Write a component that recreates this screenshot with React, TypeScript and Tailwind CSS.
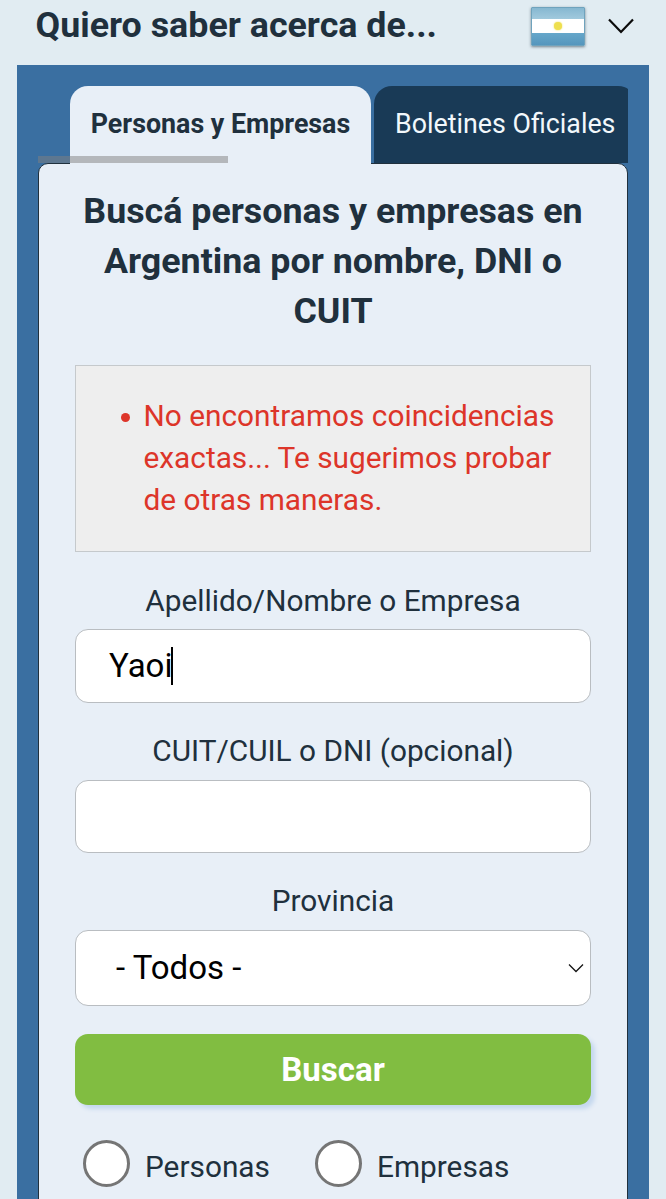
import type { ReactNode } from "react";

function Flag() {
  return (
    <div className="flex h-[39px] w-[54px] flex-col rounded-[1px] border border-[#6fa3bd] shadow-[0_1px_3px_rgba(40,60,75,0.6)]">
      <div className="h-[11px] bg-linear-to-b from-[#86b8d1] to-[#a1c9dd]" />
      <div className="flex h-[14px] items-center justify-center bg-white">
        <div className="size-[8px] rounded-full bg-[#eedf4e] shadow-[0_0_2px_#eedf4e]" />
      </div>
      <div className="flex-1 bg-linear-to-b from-[#66a7ca] to-[#5596bd]" />
    </div>
  );
}

function Label({ children }: { children: ReactNode }) {
  return (
    <div className="h-[42px] text-center text-[29.8px] leading-[42px] whitespace-nowrap text-[#20303d]">
      {children}
    </div>
  );
}

function Radio({ label }: { label: string }) {
  return (
    <div className="flex w-[232px] items-start">
      <div className="size-[47px] rounded-full border-[3px] border-[#757575] bg-white" />
      <span className="mt-[6px] ml-[15px] text-[29.8px] leading-[42px] text-[#20303d]">{label}</span>
    </div>
  );
}

export default function App() {
  return (
    <div className="h-[1199px] w-[666px] overflow-hidden bg-[#e1ecf2] font-[Roboto,sans-serif] text-[#20303d]">
      <header className="flex h-[65px] items-start pl-[35.5px]">
        <h1 className="w-[494.5px] text-[35.8px] leading-[51px] font-bold whitespace-nowrap">
          Quiero saber acerca de...
        </h1>
        <div className="mt-[7px] ml-px">
          <Flag />
        </div>
        <svg className="mt-[17px] ml-[23px]" width="28" height="18" viewBox="0 0 28 18" fill="none">
          <path d="M1 2.5L13 15L25 2.5" stroke="#0b0b0b" strokeWidth="2.2" />
        </svg>
      </header>

      <main className="ml-[17px] h-[1134px] w-[632px] bg-[#3a6fa1] px-[21px] pt-[21px]">
        <nav className="relative z-10 -mb-px flex h-[78px] items-start overflow-hidden pl-[32px] whitespace-nowrap">
          <div className="h-[78px] w-[301px] shrink-0 rounded-t-[18px] bg-[#e8eff7] text-center text-[26.8px] leading-[77px] font-bold">
            Personas y Empresas
          </div>
          <div className="ml-[3px] h-[77px] w-[262px] shrink-0 rounded-t-[18px] bg-[#193a56] pl-[21px] text-[26.8px] leading-[77px] text-[#f2f8fc]">
            Boletines Oficiales
          </div>
          <div className="absolute bottom-px left-0 h-[7px] w-[190px] bg-[#808080]/50" />
        </nav>

        <div className="h-[1036px]">
          <section className="h-[1060px] rounded-t-[10px] border border-[#20303d] bg-[#e8eff7] px-[36px] pt-[22px]">
            <h2 className="text-center text-[35.8px] leading-[50px] font-bold whitespace-nowrap">
              Buscá personas y empresas en
              <br />
              Argentina por nombre, DNI o
              <br />
              CUIT
            </h2>

            <div className="mt-[29px] flex h-[187px] w-[516px] border border-[#c5c9cc] bg-[#eeeeee] pt-[29px] pl-[45px] text-[#dd3529]">
              <span className="mt-[18px] size-[9px] shrink-0 rounded-full bg-[#dd3529]" />
              <p className="ml-[13.5px] text-[29.8px] leading-[42px] whitespace-nowrap">
                No encontramos coincidencias
                <br />
                exactas... Te sugerimos probar
                <br />
                de otras maneras.
              </p>
            </div>

            <div className="mt-[28px] w-[516px]">
              <Label>Apellido/Nombre o Empresa</Label>
              <div className="mt-[7px] flex h-[74px] items-center rounded-[13px] border border-[#b9bdc1] bg-white pl-[33px] text-[33px] text-black">
                <span>Yaoi</span>
                <span className="-ml-px h-[38px] w-[2px] bg-black" />
              </div>
            </div>

            <div className="mt-[27px] w-[516px]">
              <Label>CUIT/CUIL o DNI (opcional)</Label>
              <div className="mt-[8px] h-[73px] rounded-[13px] border border-[#b9bdc1] bg-white" />
            </div>

            <div className="mt-[27px] w-[516px]">
              <Label>Provincia</Label>
              <div className="mt-[8px] flex h-[76px] items-center justify-between rounded-[13px] border border-[#b9bdc1] bg-white pr-[6px] pl-[40px] text-[33px] text-black">
                <span>- Todos -</span>
                <svg width="16" height="10" viewBox="0 0 16 10" fill="none">
                  <path d="M1 1.5L8 8.5L15 1.5" stroke="#151515" strokeWidth="1.3" />
                </svg>
              </div>
            </div>

            <div className="mt-[28px] h-[71px] w-[516px] rounded-[13px] bg-[#81bd41] text-center text-[33px] leading-[71px] font-bold text-white shadow-[4px_4px_4px_#c5d8ee]">
              Buscar
            </div>

            <div className="mt-[35px] flex pl-[8px]">
              <Radio label="Personas" />
              <Radio label="Empresas" />
            </div>
          </section>
        </div>
      </main>
    </div>
  );
}
